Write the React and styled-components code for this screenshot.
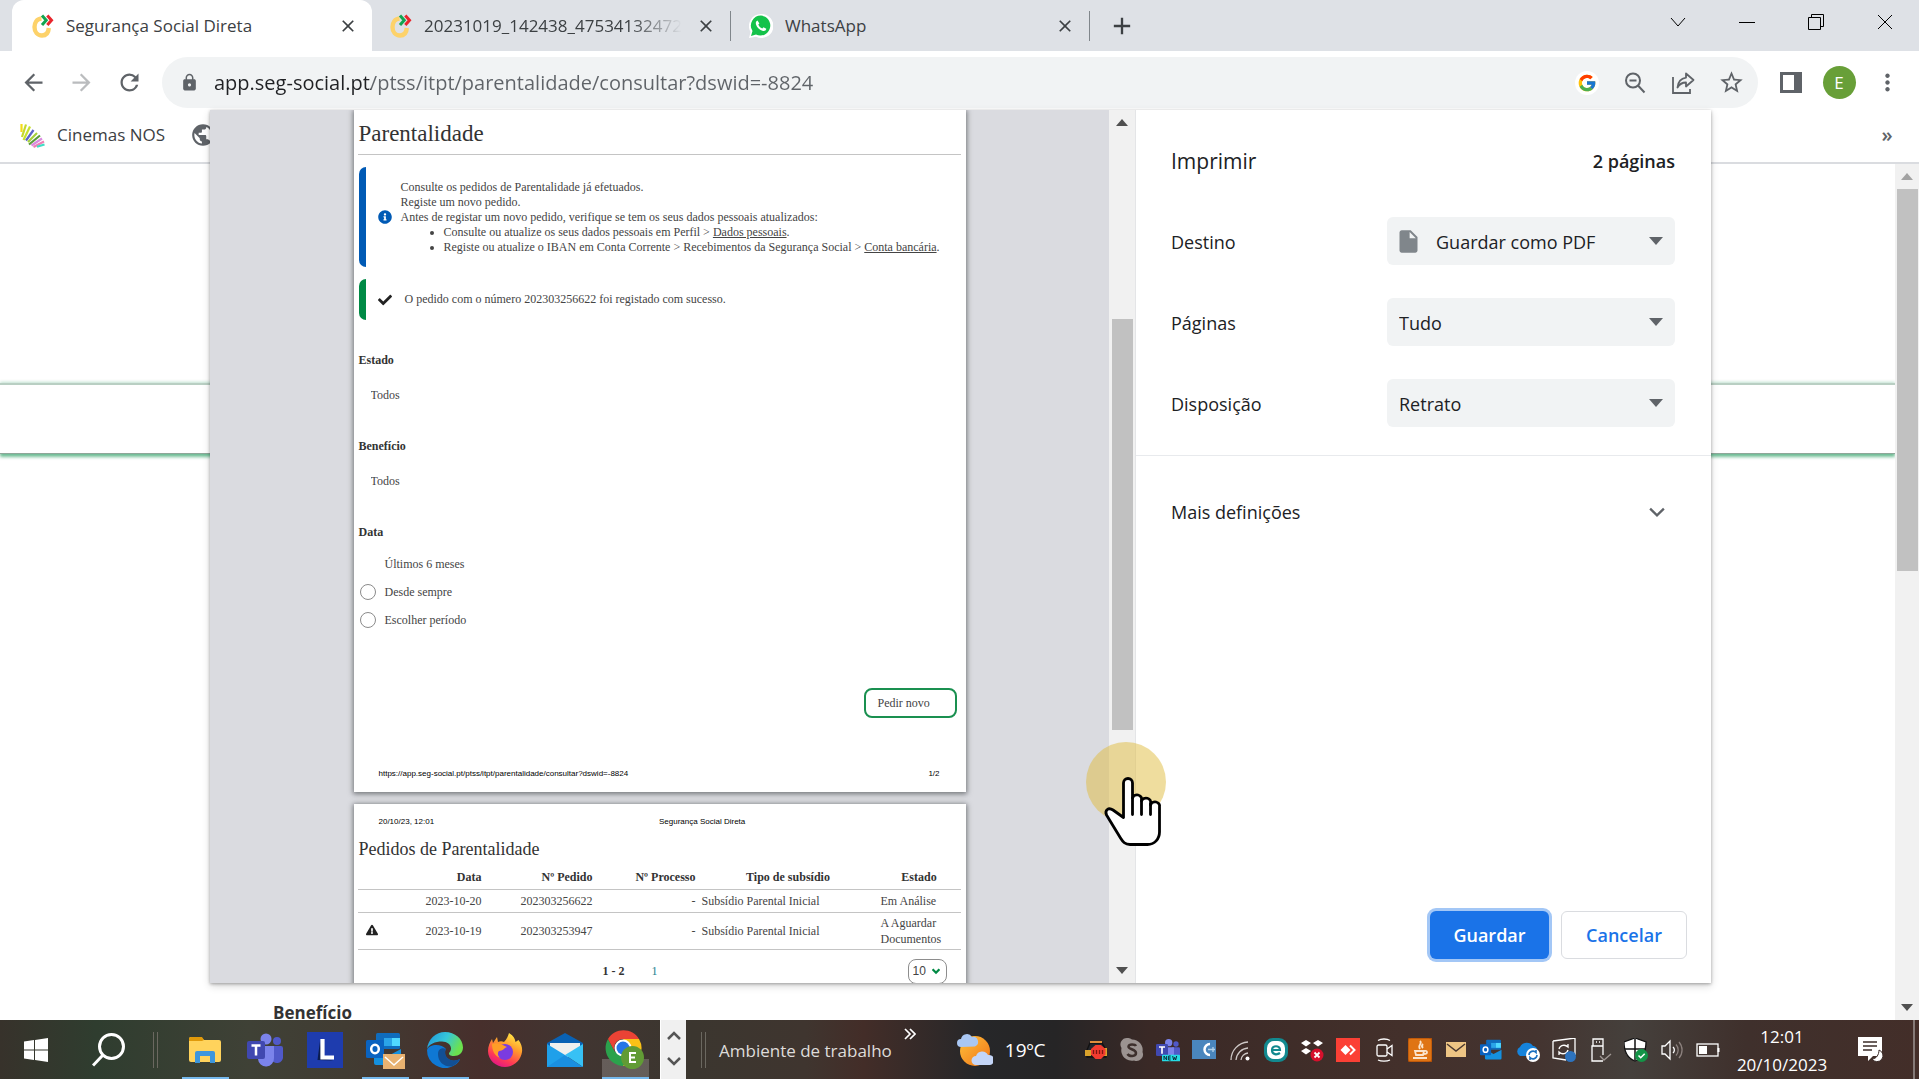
import React, { useState } from 'react';
import styled, { createGlobalStyle, css } from 'styled-components';
import { FaInfoCircle, FaCheck, FaExclamationTriangle } from 'react-icons/fa';
import { FcGoogle } from 'react-icons/fc';
import {
  MdArrowBack,
  MdArrowForward,
  MdRefresh,
  MdLock,
  MdStarBorder,
  MdMoreVert,
  MdPublic,
  MdClose,
  MdAdd,
  MdInsertDriveFile,
} from 'react-icons/md';

const ui = '"Open Sans", "Noto Sans", sans-serif';
const paper = '"Liberation Serif", serif';

const GlobalStyle = createGlobalStyle`
  * { box-sizing: border-box; }
  body { margin: 0; font-family: ${ui}; color: #202124; background: #fff; }
  h1, h2, p, ul { margin: 0; padding: 0; }
  button, input, select { font: inherit; color: inherit; margin: 0; }
  button { border: 0; padding: 0; background: none; cursor: pointer; }
`;

const Desktop = styled.div`
  height: 100vh;
  display: flex;
  flex-direction: column;
  overflow: hidden;
`;

const Browser = styled.div`
  flex: 1;
  min-height: 0;
  position: relative;
  display: flex;
  flex-direction: column;
`;

/* ---------- tab strip ---------- */

const TabStrip = styled.div`
  height: 51px;
  flex: none;
  display: flex;
  padding-left: 12px;
  background: #dee1e6;
`;

const Tab = styled.div`
  width: ${({ $active }) => ($active ? '360px' : '358px')};
  display: flex;
  align-items: center;
  padding: 0 12px 0 ${({ $active }) => ($active ? '20px' : '18px')};
  border-radius: 12px 12px 0 0;
  background: ${({ $active }) => ($active ? '#fff' : 'transparent')};
`;

const TabTitle = styled.button`
  flex: 1;
  min-width: 0;
  display: flex;
  align-items: center;
  gap: 12px;
  font-size: 17px;
  line-height: 24px;
  color: #3c4043;
  white-space: nowrap;
  overflow: hidden;
  svg { flex: none; }
  span {
    overflow: hidden;
    ${({ $fade }) => $fade && css`
      mask-image: linear-gradient(90deg, #000 80%, transparent);
    `}
  }
`;

const TabClose = styled.button`
  width: 24px;
  height: 24px;
  margin-left: 12px;
  display: grid;
  place-items: center;
  font-size: 20px;
  color: #3c4043;
`;

const TabDivider = styled.div`
  width: 1px;
  height: 30px;
  align-self: center;
  background: #80868b;
`;

const NewTab = styled.button`
  width: 64px;
  display: grid;
  place-items: center;
  font-size: 28px;
  color: #3c4043;
`;

const WindowControls = styled.div`
  margin-left: auto;
  display: flex;
  height: 43px;
`;

const WindowButton = styled.button`
  width: 69px;
  display: grid;
  place-items: center;
`;

/* ---------- toolbar ---------- */

const Toolbar = styled.div`
  flex: none;
  display: flex;
  align-items: center;
  padding: 6px 8px 2px 9px;
`;

const ToolButton = styled.button`
  width: 48px;
  height: 51px;
  flex: none;
  display: grid;
  place-items: center;
  font-size: 27px;
  color: ${({ $dim }) => ($dim ? '#babcbe' : '#5f6368')};
`;

const Omnibox = styled.form`
  flex: 1;
  height: 51px;
  margin: 0 9px;
  display: flex;
  align-items: center;
  padding: 0 3px 0 18px;
  border-radius: 26px;
  background: #f1f3f4;
  color: #5f6368;
`;

const Url = styled.input`
  flex: 1;
  min-width: 0;
  margin-left: 15px;
  padding: 0;
  border: 0;
  outline: 0;
  font-size: 20px;
  line-height: 30px;
  color: #5f6368;
  -webkit-text-fill-color: transparent;
  background: linear-gradient(90deg, #202124 157px, #5f6368 157px);
  background-clip: text;
`;

const Avatar = styled.span`
  width: 33px;
  height: 33px;
  border-radius: 50%;
  background: #689f38;
  color: #fff;
  font-size: 17px;
  line-height: 33px;
  text-align: center;
`;

const GoogleBadge = styled.span`
  width: 24px;
  height: 24px;
  border-radius: 50%;
  background: #fff;
  display: grid;
  place-items: center;
  font-size: 20px;
`;

const Bookmarks = styled.div`
  flex: none;
  height: 54px;
  display: flex;
  align-items: center;
  gap: 25px;
  padding: 0 8px 2px 20px;
  border-bottom: 2px solid #dadce0;
`;

const Bookmark = styled.a`
  display: flex;
  align-items: center;
  gap: 12px;
  font-size: 17px;
  line-height: 24px;
  color: #3c4043;
  text-decoration: none;
`;

const More = styled.button`
  width: 48px;
  margin-left: auto;
  font-size: 20px;
  line-height: 24px;
  font-weight: 600;
  color: #5f6368;
`;

/* ---------- page behind the dialog ---------- */

const PageArea = styled.div`
  flex: 1;
  min-height: 0;
  display: flex;
`;

const PageBody = styled.main`
  flex: 1;
  display: flex;
  flex-direction: column;
  justify-content: space-between;
  overflow: hidden;
`;

const GreenBand = styled.div`
  height: 71px;
  margin-top: 219px;
  border-top: 2px solid #b9cfc3;
  border-bottom: 1px solid #8fa79a;
  box-shadow: 0 -1px 3px rgba(0, 135, 70, 0.25), 0 3px 3px rgba(0, 140, 70, 0.55);
`;

const FieldTitle = styled.strong`
  height: 20px;
  padding-left: 273px;
  font-size: 17px;
  line-height: 26px;
  font-weight: 700;
  color: #333;
`;

const Track = styled.div`
  width: ${({ $wide }) => ($wide ? '27px' : '24px')};
  flex: none;
  display: flex;
  flex-direction: column;
  align-items: center;
  background: #f1f1f1;
  border-right: ${({ $wide }) => ($wide ? '1px solid #e4e5e7' : '0')};
`;

const TrackButton = styled.button`
  height: 25px;
  width: 100%;
  display: grid;
  place-items: center;
  color: ${({ $dim }) => ($dim ? '#a3a3a3' : '#505050')};
`;

const TrackRun = styled.div`
  flex: 1;
  width: 21px;
  display: grid;
  grid-template-rows: ${({ $rows }) => $rows};
`;

const Thumb = styled.div`
  grid-row: 2;
  background: #c1c1c1;
`;

/* ---------- print dialog ---------- */

const Dialog = styled.div`
  position: absolute;
  top: 110px;
  left: 210px;
  right: 208px;
  bottom: 37px;
  display: flex;
  background: #fff;
  box-shadow: 0 1px 3px rgba(0, 0, 0, 0.3), 0 3px 8px rgba(0, 0, 0, 0.16);
`;

const Preview = styled.div`
  flex: 1;
  min-width: 0;
  display: flex;
  flex-direction: column;
  align-items: center;
  gap: 12px;
  overflow: hidden;
  background: #dadbe0;
`;

const Sheet = styled.article`
  width: 612px;
  flex: none;
  padding: 10px 5px 10px 4px;
  background: #fff;
  box-shadow: 0 1px 5px 1px rgba(60, 64, 67, 0.65);
  font-family: ${paper};
  font-size: 12px;
  line-height: 16px;
  color: #444;
`;

const SheetTitle = styled.h1`
  padding: 0 0 6px 1px;
  border-bottom: 1px solid #c4c4c4;
  font-size: 23px;
  line-height: 28px;
  font-weight: 400;
  color: #333;
`;

const SheetSubtitle = styled.h2`
  padding-left: 1px;
  margin: 7px 0 5px;
  font-size: 18px;
  line-height: 24px;
  font-weight: 400;
  color: #333;
`;

const Notice = styled.section`
  min-height: ${({ $tall }) => ($tall ? '100px' : '41px')};
  margin: 12px 0 0 1px;
  display: flex;
  align-items: center;
  line-height: 15px;
  &::before {
    content: '';
    width: 7px;
    margin-right: 12px;
    align-self: stretch;
    border-radius: 7px 0 0 7px;
    background: ${({ $color }) => $color};
  }
  & > svg {
    flex: none;
    font-size: 14px;
    margin-right: ${({ $tall }) => ($tall ? '9px' : '13px')};
    color: ${({ $tall, $color }) => ($tall ? $color : '#222')};
  }
  ul { padding-left: 43px; }
  a { color: inherit; }
`;

const Field = styled.div`
  margin-top: ${({ $gap }) => $gap}px;
  label {
    display: block;
    padding-left: 1px;
    font-weight: 700;
    color: #333;
  }
`;

const FieldSelect = styled.select`
  display: block;
  margin: 19px 0 0 13px;
  padding: 0;
  height: 16px;
  border: 0;
  background: none;
  appearance: none;
`;

const RadioGroup = styled.fieldset`
  margin: 35px 0 0;
  padding: 0;
  border: 0;
  legend {
    padding: 0 0 10px 1px;
    font-weight: 700;
    color: #333;
  }
`;

const RadioRow = styled.label`
  height: 28px;
  display: flex;
  align-items: center;
  gap: 9px;
  padding-left: 2px;
`;

const Radio = styled.input`
  width: 16px;
  height: 16px;
  appearance: none;
  border: 1px solid #8b8b8b;
  border-radius: 50%;
  background: #fff;
  &:checked { border-color: transparent; }
`;

const NewRequest = styled.button`
  display: block;
  height: 30px;
  width: 93px;
  margin: 54px 4px 0 auto;
  padding-left: 12px;
  border: 2px solid #1a9050;
  border-radius: 8px;
  text-align: left;
`;

const PrintLine = styled.div`
  display: grid;
  grid-template-columns: ${({ $columns }) => $columns};
  margin-top: ${({ $top }) => $top}px;
  padding: 0 21px;
  font-family: "Liberation Sans", sans-serif;
  font-size: 8px;
  color: #000;
`;

const Table = styled.table`
  width: 100%;
  border-collapse: collapse;
  table-layout: fixed;
  th, td {
    height: 23px;
    padding: 2px 3px;
    border-bottom: 1px solid #c4c4c4;
    text-align: right;
  }
  th { color: #333; }
  td:nth-child(n + 5) { text-align: left; }
  th:nth-child(n + 5) { text-align: center; }
  td:first-child { text-align: center; font-size: 12px; line-height: 12px; color: #222; }
`;

const Pager = styled.div`
  display: grid;
  grid-template-columns: 267px 33px 1fr;
  align-items: center;
  padding: 9px 14px 0 0;
  strong { justify-self: end; color: #333; }
  a { justify-self: end; color: #1c7f8f; text-decoration: none; }
`;

const PageSize = styled.div`
  width: 39px;
  height: 25px;
  justify-self: end;
  display: flex;
  align-items: center;
  border: 1px solid #8d8d8d;
  border-radius: 8px;
  padding: 0 6px 0 4px;
  select {
    flex: 1;
    min-width: 0;
    padding: 0;
    border: 0;
    background: none;
    appearance: none;
    font-family: "Liberation Sans", sans-serif;
    font-size: 12px;
    line-height: 16px;
  }
`;

const Sidebar = styled.aside`
  width: 575px;
  flex: none;
  display: flex;
  flex-direction: column;
  font-size: 18px;
  line-height: 24px;
`;

const SideHead = styled.header`
  display: flex;
  justify-content: space-between;
  align-items: center;
  padding: 37px 36px 0 35px;
  height: 65px;
  h1 { font-size: 21px; line-height: 28px; font-weight: 400; }
  span { font-size: 18px; font-weight: 600; }
`;

const Settings = styled.div`
  display: flex;
  flex-direction: column;
  gap: 33px;
  padding: 42px 36px 28px 35px;
  border-bottom: 1px solid #e8eaed;
`;

const SettingRow = styled.div`
  display: flex;
  justify-content: space-between;
  align-items: center;
  label { padding-top: 2px; }
`;

const SelectBox = styled.div`
  width: 288px;
  height: 48px;
  display: flex;
  align-items: center;
  padding: 0 12px 0 ${({ $file }) => ($file ? '8px' : '12px')};
  gap: 14px;
  border-radius: 6px;
  background: #f1f3f4;
  & > svg { flex: none; color: #5f6368; }
  & > svg:first-child { color: #80868b; }
  select {
    flex: 1;
    min-width: 0;
    padding: 2px 0 0;
    border: 0;
    background: none;
    appearance: none;
    font-size: 18px;
  }
`;

const MoreSettings = styled.button`
  display: flex;
  justify-content: space-between;
  align-items: center;
  padding: 44px 46px 42px 35px;
  text-align: left;
`;

const Actions = styled.footer`
  margin-top: auto;
  display: flex;
  justify-content: flex-end;
  gap: 12px;
  padding: 0 24px 24px;
`;

const Action = styled.button`
  height: 48px;
  width: ${({ $primary }) => ($primary ? '119px' : '126px')};
  border-radius: 6px;
  font-size: 18px;
  font-weight: 600;
  ${({ $primary }) => $primary
    ? css`
      background: #1a73e8;
      color: #fff;
      box-shadow: 0 0 0 3px #a3c7f6;
    `
    : css`
      border: 1px solid #dadce0;
      color: #1a73e8;
    `}
`;

const Pointer = styled.div`
  position: absolute;
  right: 753px;
  top: 742px;
  width: 80px;
  height: 80px;
  border-radius: 50%;
  background: rgba(223, 187, 61, 0.5);
  pointer-events: none;
  svg { position: absolute; left: 18px; top: 34px; overflow: visible; }
`;

/* ---------- taskbar ---------- */

const Taskbar = styled.footer`
  height: 59px;
  flex: none;
  display: flex;
  align-items: stretch;
  color: #fff;
  background: linear-gradient(90deg, #37322b 0%, #2f3d2f 5%, #3f4136 13%, #413c33 18%, #472f2c 25%,
    #413531 30%, #3b362f 36%, #3f352f 42%, #432d28 45%, #262729 51%, #262526 55%, #3a2926 60%,
    #43302b 73%, #443430 80%, #45403c 85%, #3f302c 91%, #432e29 100%);
`;

const Launch = styled.button`
  width: ${({ $width }) => $width || 60}px;
  display: grid;
  place-items: center;
  ${({ $open }) => $open && css`
    background: linear-gradient(#76b9ed, #76b9ed) center bottom / 47px 2px no-repeat;
  `}
  ${({ $current }) => $current && css`
    background:
      linear-gradient(#76b9ed, #76b9ed) center bottom / 47px 2px no-repeat,
      linear-gradient(rgba(255, 255, 255, 0.2), rgba(255, 255, 255, 0.2)) center bottom / 47px 20px no-repeat;
  `}
`;

const Grip = styled.span`
  width: 5px;
  height: 36px;
  margin: 12px ${({ $after }) => $after}px 0 ${({ $before }) => $before}px;
  border: solid #6b6860;
  border-width: 0 1px;
`;

const BandScroll = styled.div`
  width: 26px;
  margin-left: 5px;
  display: flex;
  flex-direction: column;
  justify-content: space-between;
  padding: 6px 0;
  background: #f0f0f0;
  border-left: 1px solid #fff;
`;

const Band = styled.span`
  font-size: 17px;
  line-height: 24px;
  color: #dedcda;
  align-self: center;
  padding-top: 2px;
`;

const BandMore = styled.button`
  width: 36px;
  height: 28px;
`;

const Weather = styled.button`
  display: flex;
  align-items: center;
  gap: 12px;
  margin-left: 29px;
  font-size: 19px;
`;

const Tray = styled.div`
  margin-left: auto;
  display: flex;
  align-items: center;
`;

const TrayButton = styled.button`
  width: 36px;
  height: 36px;
  display: grid;
  place-items: center;
`;

const Clock = styled.time`
  width: 112px;
  text-align: center;
  font-size: 17px;
  line-height: 28px;
  padding-top: 3px;
`;

const Notifications = styled.button`
  width: 62px;
  margin-left: 1px;
  display: grid;
  place-items: center;
`;

const ShowDesktop = styled.button`
  width: 6px;
  align-self: stretch;
  margin-left: 12px;
  border-left: 2px solid #857a77;
`;

/* ---------- drawings ---------- */

const SocialLogo = () => (
  <svg width="22" height="24" viewBox="0 0 22 24" fill="none">
    <path d="M9.500 4.500C4.500 5 2.500 9 2.500 13c0 5 3 8.500 7.500 8.500 4.200 0 6.500-3 6.800-7.500" stroke="#fdd26a" strokeWidth="4.400" />
    <path d="M10 1.500l4.200 4.700L10 11" stroke="#12a551" strokeWidth="3" />
    <path d="M15.300 1.500l4.200 4.700-4.200 4.800" stroke="#e8262d" strokeWidth="3" />
  </svg>
);

const WhatsAppLogo = () => (
  <svg width="24" height="24" viewBox="0 0 24 24">
    <path d="M12 0a12 12 0 1 1-5 22.700L0 24l1.600-6A12 12 0 0 1 12 0z" fill="#fff" />
    <path d="M12 1.600a10 10 0 1 1-5 19L2 22l1.500-5A10 10 0 0 1 12 1.600z" fill="#14c24a" />
    <path d="M8.500 6.500c-1.500.5-2 2-1.500 4 1 3 3.500 5.500 7 6.400 1.800.3 3-.5 3.300-2.200l-2.800-1.500-1.200 1.400c-2-.8-3.300-2.100-4-4l1.100-1.200z" fill="#fff" />
  </svg>
);

const CinemasLogo = () => (
  <svg width="25" height="25" viewBox="0 0 25 25" strokeWidth="2.200">
    <path d="M1.500 1v8" stroke="#f4dc17" />
    <path d="M6 1.500L2 14" stroke="#c5d92d" />
    <path d="M10 3.500L3.500 17" stroke="#c5e02d" />
    <path d="M13.500 7L6 17.500" stroke="#5b63c9" />
    <path d="M17 10L8 19" stroke="#a5cf3a" />
    <path d="M20 12.500L9 21.500" stroke="#5b9a3a" />
    <path d="M22 15.500L11.500 22.500" stroke="#d98be0" />
    <path d="M24 18.500L13.500 24" stroke="#ef7fb4" />
    <path d="M17 23.800l7.500-2.300" stroke="#3fdcc4" />
  </svg>
);

const Arrow = ({ up, width = 12 }) => (
  <svg width={width} height={width / 2 + 1} viewBox="0 0 12 6" preserveAspectRatio="none">
    <path d={up ? 'M0 6l6-6 6 6z' : 'M0 0l6 6 6-6z'} fill="currentColor" />
  </svg>
);

const Chevron = ({ up, size = 14, color = '#5f6368', width = 2 }) => (
  <svg width={size} height={size} viewBox="0 0 14 14" fill="none" stroke={color} strokeWidth={width}>
    <path d={up ? 'M1 10l6-6 6 6' : 'M1 4l6 6 6-6'} />
  </svg>
);

const ZoomOutIcon = () => (
  <svg width="22" height="22" viewBox="0 0 22 22" fill="none" stroke="currentColor" strokeWidth="2">
    <circle cx="9" cy="8.500" r="7" />
    <path d="M5.500 8.500h7M14 13.500l6.500 7" />
  </svg>
);

const ShareIcon = () => (
  <svg width="24" height="24" viewBox="0 0 24 24" fill="none" stroke="currentColor" strokeWidth="1.800">
    <path d="M2 6v16h17v-4" />
    <path d="M15 2.500l7.500 6.500-7.500 6.500v-4c-4 0-6.500 1.500-8.500 5 .5-5.500 3.500-9 8.500-9.800z" strokeLinejoin="round" />
  </svg>
);

const WindowGlyph = ({ children }) => (
  <svg width="16" height="16" viewBox="0 0 16 16" fill="none" stroke="#000" strokeWidth="1">{children}</svg>
);

const PanelIcon = () => (
  <svg width="22" height="21" viewBox="0 0 22 21">
    <path d="M0 0h22v21H0zM3 3v15h11V3z" fill="#5f6368" fillRule="evenodd" />
  </svg>
);

const HandCursor = () => (
  <svg width="58" height="71" viewBox="0 0 58 71" fill="#fff" stroke="#000" strokeWidth="2.800" strokeLinejoin="round" strokeLinecap="round">
    <path d="M19.500 41.500V7a4.500 4.500 0 0 1 9 0v15a4.500 4 0 0 1 9 2v1a4.500 4 0 0 1 9 2.500V29a4.500 4 0 0 1 9 2v25c0 7-5 12.500-12 12.500H26c-5 0-7-2.500-9.500-6.500L2.500 39c-2-5 2-8 6.500-5z" />
    <path d="M28.500 22v16.500M37.500 25v13.500M46.500 28v10.500" />
  </svg>
);

const WindowsLogo = () => (
  <svg width="24" height="24" viewBox="0 0 24 24" fill="#fff">
    <path d="M0 3.400l10-1.400v9.500H0zM11 1.900L24 0v11.500H11zM0 12.500h10V22L0 20.600zM11 12.500h13V24l-13-1.900z" />
  </svg>
);

const SearchGlyph = () => (
  <svg width="33" height="34" viewBox="0 0 33 34" fill="none" stroke="#fff" strokeWidth="3">
    <circle cx="19.500" cy="13.500" r="12" />
    <path d="M11 22L1 32.500" />
  </svg>
);

const Explorer = () => (
  <svg width="32" height="28" viewBox="0 0 32 28">
    <path d="M0 3a2 2 0 0 1 2-2h10l3 3h15a2 2 0 0 1 2 2v18a2 2 0 0 1-2 2H2a2 2 0 0 1-2-2z" fill="#ffd35c" />
    <path d="M0 5V3a2 2 0 0 1 2-2h11l2 3-2 1z" fill="#e09a0b" />
    <path d="M6 27V17a2 2 0 0 1 2-2h16a2 2 0 0 1 2 2v10h-5v-7H11v7z" fill="#3d96dc" />
  </svg>
);

const Teams = ({ badge, size = 36 }) => (
  <svg width={size} height={size} viewBox="0 0 36 36">
    <circle cx="30" cy="9" r="4" fill="#5059c9" />
    <path d="M24 14h10a2 2 0 0 1 2 2v8a6 6 0 0 1-12 2z" fill="#5059c9" />
    <circle cx="19" cy="7" r="5.500" fill="#7b83eb" />
    <path d="M11 14h16v12a8 8 0 0 1-16 1z" fill="#7b83eb" />
    <rect y="9" width="18" height="18" rx="2" fill="#4048b0" />
    <path d="M4.500 13.500h9M9 13.500v10" stroke="#fff" strokeWidth="2.500" />
    {badge && (
      <g>
        <rect x="9" y="25" width="27" height="10" rx="1" fill="#25dbe4" />
        <path d="M12 33v-6l4 6v-6M22 27h-3v6h3M19 30h3M25 27l1.500 6 1.500-4 1.500 4 1.500-6" fill="none" stroke="#0b2c3a" strokeWidth="1.500" />
      </g>
    )}
  </svg>
);

const LApp = () => (
  <svg width="36" height="36" viewBox="0 0 36 36">
    <rect width="36" height="36" fill="#1e3cae" />
    <path d="M13 9l-2.500 19 16 .5-11-2z" fill="#0b1c4e" />
    <path d="M15.500 7v18.500H27" fill="none" stroke="#fff" strokeWidth="4.200" />
  </svg>
);

const Outlook = ({ mail, size = 39 }) => (
  <svg width={size} height={size} viewBox="0 0 39 39">
    <rect x="10" y="3" width="24" height="16" rx="1.500" fill="#0f6cbd" />
    <path d="M18 8h8v8h-8z" fill="#2aa4e8" />
    <path d="M26 8h8v8h-8z" fill="#50d9ff" />
    <path d="M8 18l14 8 13-7v14a2 2 0 0 1-2 2H10a2 2 0 0 1-2-2z" fill="#1490df" />
    <rect y="10" width="18" height="18" rx="1.500" fill="#0a63c0" />
    <ellipse cx="9" cy="19" rx="3.800" ry="4.300" fill="none" stroke="#fff" strokeWidth="2.500" />
    {mail && (
      <g>
        <rect x="17" y="24" width="22" height="15" fill="#e8b271" />
        <path d="M19 27l9 8 9-8" fill="none" stroke="#fff" strokeWidth="1.500" />
      </g>
    )}
  </svg>
);

const Edge = () => (
  <svg width="36" height="36" viewBox="0 0 36 36">
    <defs>
      <linearGradient id="edgeTop" x1="0" y1="0" x2="1" y2="0.400">
        <stop offset="0" stopColor="#1d93dc" />
        <stop offset="0.550" stopColor="#36c6d8" />
        <stop offset="1" stopColor="#6be24e" />
      </linearGradient>
    </defs>
    <path d="M0 18a18 18 0 0 0 27 15.600c3-1.600 5-4 6-6.600-3 1.500-5 2-8 1.500-6-1-9-7-6-11.500C14 11 2 12 0 18z" fill="#0f78d4" />
    <path d="M11 22c0 8 6 13 14 12.500 4-2 7-5 8-7.500-3 1.500-6 2-9 1-5-1.500-7-7-5-11-4-2-8 0-8 5z" fill="#124f94" />
    <path d="M0 17C1 7 9 0 18 0c10 0 18 7 18 15.500 0 5-4 8.500-9 8.500-4 0-5-1.500-5-2.500s2-1.700 2-5c0-4-4-7-9-7C8 9.500 2 12 0 17z" fill="url(#edgeTop)" />
  </svg>
);

const Firefox = () => (
  <svg width="36" height="36" viewBox="0 0 36 36">
    <defs>
      <linearGradient id="fox" x1="0.800" y1="0" x2="0.300" y2="1">
        <stop offset="0" stopColor="#fff04a" />
        <stop offset="0.400" stopColor="#ff9a2b" />
        <stop offset="0.750" stopColor="#ff3a55" />
        <stop offset="1" stopColor="#e01588" />
      </linearGradient>
    </defs>
    <path d="M22 1c5 3 6 6 6.500 9l3-2c3 4 4 8 3.500 12-1 8-8 15-17 15S1 28 1 19c0-5 2-9 4-12l1 4 4-6 1 5c2-1 4-1 6 0 3-3 4-6 5-9z" fill="url(#fox)" />
    <circle cx="18" cy="20" r="8" fill="#7a3be0" />
    <path d="M5 12c5-2 9 0 15 3-3 1-4 4-8 4-2 2-1 5 1 7-5-2-8-7-8-14z" fill="#ff9d27" />
  </svg>
);

const MailApp = () => (
  <svg width="36" height="34" viewBox="0 0 36 34">
    <path d="M0 10L18 0l18 10v5H0z" fill="#0a62b4" />
    <path d="M3 10h30v8L18 26 3 18z" fill="#f0f0ee" />
    <path d="M0 11l18 11v12H0z" fill="#1fa0ea" />
    <path d="M18 22l18-11v23z" fill="#37c1f5" />
    <path d="M0 34l18-12 18 12z" fill="#1a8fe0" />
  </svg>
);

const Chrome = () => (
  <svg width="40" height="40" viewBox="0 0 40 40">
    <path d="M18 9h16a18 18 0 0 1-16 27l8-14z" fill="#fbc116" />
    <path d="M10 22L3 9a18 18 0 0 0 15 27l7-13z" fill="#2ba24c" />
    <path d="M3 9a18 18 0 0 1 31 0H18a9 9 0 0 0-8 13z" fill="#ea4335" />
    <circle cx="18" cy="18" r="8.500" fill="#fff" />
    <circle cx="18" cy="18" r="6.500" fill="#2775e8" />
    <circle cx="27.500" cy="27.500" r="11.500" fill="#619b35" />
    <path d="M31 23h-6v9h6M25 27.500h5" fill="none" stroke="#fff" strokeWidth="2" />
  </svg>
);

const WeatherIcon = () => (
  <svg width="36" height="34" viewBox="0 0 36 34">
    <defs>
      <linearGradient id="sun" x1="0" y1="0" x2="1" y2="1">
        <stop offset="0" stopColor="#ffc13a" />
        <stop offset="1" stopColor="#f07418" />
      </linearGradient>
    </defs>
    <circle cx="18" cy="18" r="15" fill="url(#sun)" />
    <path d="M4 14a4 4 0 0 1 0-8 6 6 0 0 1 11-2 5 5 0 0 1 3 9.500z" fill="#a9c7f3" />
    <path d="M19 32a4.500 4.500 0 0 1 0-9 6.500 6.500 0 0 1 12-1 5 5 0 0 1 2 10z" fill="#c3d5f7" />
  </svg>
);

const Glyph = ({ children }) => (
  <svg width="24" height="24" viewBox="0 0 24 24" fill="none" stroke="#fff" strokeWidth="1.300">{children}</svg>
);

const trayIcons = [
  ['Táxi', <Glyph>
    <path d="M3 12l3-7h12l4 7v7H3z" fill="#23262c" stroke="#111" />
    <path d="M1 12h6v6H1zM20 10h3v8h-3z" fill="#d9a22b" stroke="none" />
    <path d="M6 4h12" stroke="#e08e3c" strokeWidth="2" />
    <path d="M11.500 7h5.500l4.500 4v5.500L17 21h-5.500L7 16.500V11z" fill="#f23c30" stroke="none" />
    <path d="M9.500 12v4M12.500 12v4M15.500 12v4M18.500 12v4" stroke="#7d1512" />
  </Glyph>],
  ['Skype', <Glyph>
    <path d="M7 0a7 7 0 0 1 5 1.500A10.500 10.500 0 0 1 22.500 14 6.500 6.500 0 0 1 14 22.500 10.500 10.500 0 0 1 1.500 10 6.500 6.500 0 0 1 7 0z" fill="#9b9391" stroke="none" />
    <path d="M16 8c-1-2-7-2.500-7.500.5S16 11 16 15s-7 3.500-8.500 1" stroke="#3d302d" strokeWidth="2.500" />
  </Glyph>],
  ['Teams', <Teams badge size={24} />],
  ['Painel', <Glyph>
    <rect y="2" width="24" height="19" fill="#4a86bd" stroke="none" />
    <path d="M18 6a5.500 5.500 0 1 0 0 11" strokeWidth="2.500" />
    <path d="M16 11.500h7M21 9v5" stroke="#b3d2ea" />
  </Glyph>],
  ['Rede', <Glyph>
    <path d="M3 22A18 18 0 0 1 20 4M8 22A13 13 0 0 1 20 10M13 22a8 8 0 0 1 7-7" stroke="#cfc9c7" />
    <circle cx="19.500" cy="20.500" r="2" fill="#fff" stroke="none" />
  </Glyph>],
  ['ESET', <Glyph>
    <rect x="0" y="0" width="24" height="24" rx="9" fill="#12898f" stroke="none" />
    <rect x="3" y="3" width="18" height="18" rx="7" fill="#fff" stroke="none" />
    <path d="M8 12h8c0-5-8-5-8 0s5 5 8 3" stroke="#12898f" strokeWidth="2.200" />
  </Glyph>],
  ['Dropbox', <Glyph>
    <path d="M6 2l5 3-5 3.500L1 5zM18 2l5 3-5 3.500L13 5zM6 10l5 3-5 3.500L1 13z" fill="#fff" stroke="none" />
    <circle cx="17" cy="17" r="6.500" fill="#d6102c" stroke="none" />
    <path d="M14.500 14.500l5 5M19.500 14.500l-5 5" strokeWidth="1.800" />
  </Glyph>],
  ['AnyDesk', <Glyph>
    <rect width="24" height="24" fill="#fb4035" stroke="none" />
    <path d="M9.500 7l5 5-5 5-5-5z" fill="#fff" stroke="none" />
    <path d="M14 7.500l4.500 4.500-4.500 4.500" strokeWidth="2" />
  </Glyph>],
  ['Câmara', <Glyph>
    <rect x="5" y="7" width="10" height="11" rx="1.500" />
    <path d="M15 11l5-3.500v10L15 14M6 2.500c3-2 9-2 12 0M6 22c3 1.500 9 1.500 12 0" />
  </Glyph>],
  ['Java', <Glyph>
    <rect width="24" height="24" rx="3" fill="#df7414" stroke="#b65208" />
    <path d="M12 3c3 3-3 4 0 8M15 6c-2 2-1 3 0 4M7 13h9l-1 4H8zM16 13c4-1 4 3 0 3M5 20h14" stroke="#fbe4cb" strokeWidth="1.800" />
  </Glyph>],
  ['Correio', <Glyph>
    <rect x="2" y="4" width="20" height="15" fill="#eec584" stroke="none" />
    <path d="M3 6l9 7 9-7" stroke="#4b3930" strokeWidth="1.500" />
  </Glyph>],
  ['Outlook', <Outlook size={24} />],
  ['OneDrive', <Glyph>
    <path d="M4 18a5 5 0 0 1 0-9 7.500 7.500 0 0 1 13-1c5 0 6 7 2 10z" fill="#1583dc" stroke="none" />
    <circle cx="17" cy="17" r="7" fill="#fff" stroke="none" />
    <path d="M13 17a4 4 0 0 1 7-2.500V12M21 17a4 4 0 0 1-7 2.500V22" stroke="#1a6fc0" strokeWidth="1.600" />
  </Glyph>],
  ['Atualizações', <Glyph>
    <path d="M1 3l22-3v17M1 3v17l13 2" />
    <path d="M7 11c1-4 6-5 9-2V6M16 12c-1 4-6 5-9 2v3" />
    <circle cx="18.500" cy="18.500" r="5.500" fill="#2d73be" stroke="none" />
  </Glyph>],
  ['Dispositivo', <Glyph>
    <path d="M15 23H4V8h11v9M5 8V1h10v7M8 4h1M11 4h1" />
    <path d="M12 18l4 4 7-6" stroke="#9f9794" />
  </Glyph>],
  ['Segurança', <Glyph>
    <path d="M11 0l11 4c0 10-3 16-11 19C3 20 0 14 0 4z" fill="#fff" stroke="#111" />
    <path d="M11 1v21M1 11h21" stroke="#111" strokeWidth="1.500" />
    <circle cx="17.500" cy="17.500" r="6.500" fill="#139447" stroke="none" />
    <path d="M14.500 17.500l2.200 2.200 4-4" strokeWidth="1.600" />
  </Glyph>],
  ['Som', <Glyph>
    <path d="M2 8h3l5-5v18l-5-5H2z" />
    <path d="M13 9a4 4 0 0 1 0 6" />
    <path d="M16 6.500a8 8 0 0 1 0 11M19 4a12 12 0 0 1 0 16" stroke="#8b807d" />
  </Glyph>],
  ['Bateria', <Glyph>
    <rect x="1" y="6" width="21" height="12" />
    <path d="M22.500 10v4" strokeWidth="2" />
    <rect x="3" y="8" width="8" height="8" fill="#fff" stroke="none" />
  </Glyph>],
];

const launchers = [
  { name: 'Explorador de Ficheiros', icon: <Explorer />, open: true },
  { name: 'Microsoft Teams', icon: <Teams /> },
  { name: 'L', icon: <LApp /> },
  { name: 'Outlook', icon: <Outlook mail />, open: true },
  { name: 'Edge', icon: <Edge />, open: true },
  { name: 'Firefox', icon: <Firefox /> },
  { name: 'Correio', icon: <MailApp /> },
  { name: 'Chrome', icon: <Chrome />, current: true },
];

const tabs = [
  { title: 'Segurança Social Direta', icon: <SocialLogo />, active: true },
  { title: '20231019_142438_47534132472', icon: <SocialLogo />, fade: true },
  { title: 'WhatsApp', icon: <WhatsAppLogo /> },
];

const requests = [
  { warn: false, date: '2023-10-20', id: '202303256622', type: 'Subsídio Parental Inicial', state: 'Em Análise' },
  { warn: true, date: '2023-10-19', id: '202303253947', type: 'Subsídio Parental Inicial', state: 'A Aguardar Documentos' },
];

const settings = [
  { id: 'destino', label: 'Destino', value: 'Guardar como PDF', file: true },
  { id: 'paginas', label: 'Páginas', value: 'Tudo' },
  { id: 'disposicao', label: 'Disposição', value: 'Retrato' },
];

const periods = ['Últimos 6 meses', 'Desde sempre', 'Escolher período'];

function BrowserTabs() {
  return (
    <TabStrip>
      {tabs.map((tab) => (
        <React.Fragment key={tab.title}>
          <Tab $active={tab.active}>
            <TabTitle $fade={tab.fade}>
              {tab.icon}
              <span>{tab.title}</span>
            </TabTitle>
            <TabClose aria-label="Fechar separador"><MdClose /></TabClose>
          </Tab>
          {!tab.active && <TabDivider />}
        </React.Fragment>
      ))}
      <NewTab aria-label="Novo separador"><MdAdd /></NewTab>
      <WindowControls>
        <WindowButton aria-label="Procurar separadores">
          <WindowGlyph><path d="M1 4l7 8 7-8" /></WindowGlyph>
        </WindowButton>
        <WindowButton aria-label="Minimizar">
          <WindowGlyph><path d="M0 8.500h16" /></WindowGlyph>
        </WindowButton>
        <WindowButton aria-label="Restaurar">
          <WindowGlyph><path d="M.5 3.500h12v12H.5zM3.500 3.500v-3h12v12h-3" /></WindowGlyph>
        </WindowButton>
        <WindowButton aria-label="Fechar">
          <WindowGlyph><path d="M1 1l14 14M15 1L1 15" /></WindowGlyph>
        </WindowButton>
      </WindowControls>
    </TabStrip>
  );
}

function BrowserToolbar() {
  const [url, setUrl] = useState('app.seg-social.pt/ptss/itpt/parentalidade/consultar?dswid=-8824');
  return (
    <Toolbar>
      <ToolButton aria-label="Anterior"><MdArrowBack /></ToolButton>
      <ToolButton aria-label="Seguinte" $dim><MdArrowForward /></ToolButton>
      <ToolButton aria-label="Atualizar"><MdRefresh /></ToolButton>
      <Omnibox>
        <MdLock size={19} />
        <Url aria-label="Endereço" value={url} onChange={(e) => setUrl(e.target.value)} />
        <ToolButton type="button" aria-label="Google"><GoogleBadge><FcGoogle /></GoogleBadge></ToolButton>
        <ToolButton type="button" aria-label="Zoom"><ZoomOutIcon /></ToolButton>
        <ToolButton type="button" aria-label="Partilhar"><ShareIcon /></ToolButton>
        <ToolButton type="button" aria-label="Marcador"><MdStarBorder /></ToolButton>
      </Omnibox>
      <ToolButton aria-label="Painel lateral"><PanelIcon /></ToolButton>
      <ToolButton aria-label="Perfil"><Avatar>E</Avatar></ToolButton>
      <ToolButton aria-label="Menu"><MdMoreVert /></ToolButton>
    </Toolbar>
  );
}

function PreviewPages() {
  return (
    <Preview>
      <Sheet>
        <SheetTitle>Parentalidade</SheetTitle>
        <Notice $tall $color="#005ab5">
          <FaInfoCircle />
          <div>
            <p>Consulte os pedidos de Parentalidade já efetuados.</p>
            <p>Registe um novo pedido.</p>
            <p>Antes de registar um novo pedido, verifique se tem os seus dados pessoais atualizados:</p>
            <ul>
              <li>Consulte ou atualize os seus dados pessoais em Perfil &gt; <a href="#dados">Dados pessoais</a>.</li>
              <li>Registe ou atualize o IBAN em Conta Corrente &gt; Recebimentos da Segurança Social &gt; <a href="#conta">Conta bancária</a>.</li>
            </ul>
          </div>
        </Notice>
        <Notice $color="#008a45">
          <FaCheck />
          <p>O pedido com o número 202303256622 foi registado com sucesso.</p>
        </Notice>
        <Field $gap={32}>
          <label htmlFor="estado">Estado</label>
          <FieldSelect id="estado"><option>Todos</option></FieldSelect>
        </Field>
        <Field $gap={35}>
          <label htmlFor="beneficio">Benefício</label>
          <FieldSelect id="beneficio"><option>Todos</option></FieldSelect>
        </Field>
        <RadioGroup>
          <legend>Data</legend>
          {periods.map((period, i) => (
            <RadioRow key={period}>
              <Radio type="radio" name="periodo" defaultChecked={i === 0} />
              {period}
            </RadioRow>
          ))}
        </RadioGroup>
        <NewRequest>Pedir novo</NewRequest>
        <PrintLine $top={48} $columns="1fr auto">
          <span>https://app.seg-social.pt/ptss/itpt/parentalidade/consultar?dswid=-8824</span>
          <span>1/2</span>
        </PrintLine>
      </Sheet>
      <Sheet>
        <PrintLine $top={0} $columns="1fr 1fr">
          <span>20/10/23, 12:01</span>
          <span>Segurança Social Direta</span>
        </PrintLine>
        <SheetSubtitle>Pedidos de Parentalidade</SheetSubtitle>
        <Table>
          <colgroup>
            <col width="28" />
            <col width="99" />
            <col width="111" />
            <col width="103" />
            <col width="179" />
            <col width="83" />
          </colgroup>
          <thead>
            <tr>
              <th aria-label="Aviso" />
              <th>Data</th>
              <th>Nº Pedido</th>
              <th>Nº Processo</th>
              <th>Tipo de subsídio</th>
              <th>Estado</th>
            </tr>
          </thead>
          <tbody>
            {requests.map((r) => (
              <tr key={r.id}>
                <td>{r.warn && <FaExclamationTriangle />}</td>
                <td>{r.date}</td>
                <td>{r.id}</td>
                <td>-</td>
                <td>{r.type}</td>
                <td>{r.state}</td>
              </tr>
            ))}
          </tbody>
        </Table>
        <Pager>
          <strong>1 - 2</strong>
          <a href="#1">1</a>
          <PageSize>
            <select aria-label="Linhas por página"><option>10</option></select>
            <Chevron size={8} color="#008a45" width={4} />
          </PageSize>
        </Pager>
      </Sheet>
    </Preview>
  );
}

function PrintDialog() {
  return (
    <Dialog role="dialog" aria-label="Imprimir">
      <PreviewPages />
      <Track $wide>
        <TrackButton aria-label="Para cima"><Arrow up /></TrackButton>
        <TrackRun $rows="184fr 411fr 228fr"><Thumb /></TrackRun>
        <TrackButton aria-label="Para baixo"><Arrow /></TrackButton>
      </Track>
      <Sidebar>
        <SideHead>
          <h1>Imprimir</h1>
          <span>2 páginas</span>
        </SideHead>
        <Settings>
          {settings.map((s) => (
            <SettingRow key={s.id}>
              <label htmlFor={s.id}>{s.label}</label>
              <SelectBox $file={s.file}>
                {s.file && <MdInsertDriveFile size={27} />}
                <select id={s.id}><option>{s.value}</option></select>
                <Arrow width={14} />
              </SelectBox>
            </SettingRow>
          ))}
        </Settings>
        <MoreSettings>
          Mais definições
          <Chevron size={16} />
        </MoreSettings>
        <Actions>
          <Action $primary>Guardar</Action>
          <Action>Cancelar</Action>
        </Actions>
      </Sidebar>
    </Dialog>
  );
}

function WindowsTaskbar() {
  return (
    <Taskbar>
      <Launch $width={72} aria-label="Iniciar"><WindowsLogo /></Launch>
      <Launch $width={72} aria-label="Procurar"><SearchGlyph /></Launch>
      <Grip $before={9} $after={17} />
      {launchers.map((app) => (
        <Launch key={app.name} aria-label={app.name} $open={app.open} $current={app.current}>
          {app.icon}
        </Launch>
      ))}
      <BandScroll>
        <button aria-label="Subir"><Chevron up size={14} color="#555" width={2.5} /></button>
        <button aria-label="Descer"><Chevron size={14} color="#555" width={2.5} /></button>
      </BandScroll>
      <Grip $before={15} $after={13} />
      <Band>Ambiente de trabalho</Band>
      <BandMore aria-label="Mais">
        <svg width="12" height="12" viewBox="0 0 12 12" fill="none" stroke="#fff" strokeWidth="1.700">
          <path d="M1 1l5 5-5 5M6 1l5 5-5 5" />
        </svg>
      </BandMore>
      <Weather><WeatherIcon />19ºC</Weather>
      <Tray>
        {trayIcons.map(([name, icon]) => (
          <TrayButton key={name} aria-label={name}>{icon}</TrayButton>
        ))}
        <Clock>12:01<br />20/10/2023</Clock>
        <Notifications aria-label="Notificações">
          <svg width="25" height="25" viewBox="0 0 25 25">
            <path d="M0 0h24v19h-9l-5 5v-5H0z" fill="#fff" />
            <path d="M5 5h14M5 9h14M5 13h9" stroke="#3b2c29" strokeWidth="1.400" />
            <path d="M21 13a6 6 0 1 1-7 9c4 0 7-4 7-9z" fill="#fff" stroke="#3b2c29" />
          </svg>
        </Notifications>
        <ShowDesktop aria-label="Mostrar ambiente de trabalho" />
      </Tray>
    </Taskbar>
  );
}

export default function App() {
  return (
    <Desktop>
      <GlobalStyle />
      <Browser>
        <BrowserTabs />
        <BrowserToolbar />
        <Bookmarks>
          <Bookmark href="#cinemas"><CinemasLogo />Cinemas NOS</Bookmark>
          <Bookmark href="#web" aria-label="Marcador"><MdPublic size={26} color="#5f6368" /></Bookmark>
          <More aria-label="Mais marcadores">»</More>
        </Bookmarks>
        <PageArea>
          <PageBody>
            <GreenBand />
            <FieldTitle>Benefício</FieldTitle>
          </PageBody>
          <Track>
            <TrackButton $dim aria-label="Para cima"><Arrow up /></TrackButton>
            <TrackRun $rows="0fr 382fr 424fr"><Thumb /></TrackRun>
            <TrackButton aria-label="Para baixo"><Arrow /></TrackButton>
          </Track>
        </PageArea>
        <PrintDialog />
        <Pointer><HandCursor /></Pointer>
      </Browser>
      <WindowsTaskbar />
    </Desktop>
  );
}
